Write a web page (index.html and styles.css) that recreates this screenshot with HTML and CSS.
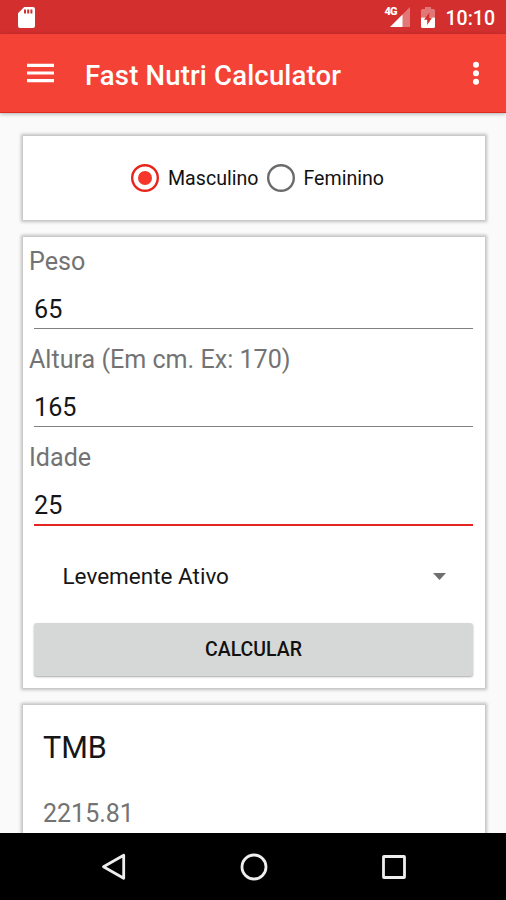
FILE: index.html
```html
<!DOCTYPE html>
<html lang="pt">
<head>
<meta charset="utf-8">
<title>Fast Nutri Calculator</title>
<link rel="stylesheet" href="styles.css">
</head>
<body>
<div class="screen">
  <div class="status">
    <svg class="sd" width="17" height="21" viewBox="0 0 17 21"><path fill="#fff" fill-rule="evenodd" d="M6.2 0H15Q17 0 17 2V19Q17 21 15 21H2Q0 21 0 19V6.2ZM6 2.5V6.500H8V2.500ZM9.200 2.500V6.500H11.200V2.500ZM12.400 2.500V6.500H14.400V2.500Z"/></svg>
    <div class="status-right">
      <div class="signal">
        <svg width="20" height="20" viewBox="0 0 20 20"><path fill="#fff" fill-opacity=".35" d="M20 0V20H12V8Z"/><path fill="#fff" d="M12.500 7.500V20H0Z"/></svg>
        <span class="net">4G</span>
      </div>
      <svg class="battery" width="14" height="21" viewBox="0 0 14 21"><path fill="#fff" fill-opacity=".35" d="M4 0H10V2H12.500Q14 2 14 3.500V10.500H0V3.500Q0 2 1.500 2H4Z"/><path fill="#fff" d="M0 10.500H14V19.500Q14 21 12.500 21H1.500Q0 21 0 19.500Z"/><path fill="#d32f2f" d="M8.300 5.500L3 12.800H6.200V18L11 10.800H8.300Z"/></svg>
      <span class="time">10:10</span>
    </div>
  </div>
  <header class="appbar">
    <svg class="menu" width="27" height="20" viewBox="0 0 27 20"><path fill="#fff" d="M0 .8H27V4H0ZM0 8.400H27V11.600H0ZM0 16H27V19.200H0Z"/></svg>
    <h1 class="title">Fast Nutri Calculator</h1>
    <svg class="more" width="8" height="24" viewBox="0 0 8 24"><g fill="#fff"><circle cx="4" cy="3.800" r="3"/><circle cx="4" cy="12.300" r="3"/><circle cx="4" cy="20.800" r="3"/></g></svg>
  </header>
  <main class="content">
    <section class="card gender">
      <svg width="28" height="28" viewBox="0 0 28 28"><circle cx="14" cy="14" r="12.800" fill="none" stroke="#e8251c" stroke-width="2.400"/><circle cx="14" cy="14" r="7" fill="#f4372a"/></svg>
      <span class="opt male">Masculino</span>
      <svg width="28" height="28" viewBox="0 0 28 28"><circle cx="14" cy="14" r="12.800" fill="none" stroke="#6b6b6b" stroke-width="2.400"/></svg>
      <span class="opt female">Feminino</span>
    </section>
    <section class="card form">
      <div class="label">Peso</div>
      <div class="input">65</div>
      <div class="label">Altura (Em cm. Ex: 170)</div>
      <div class="input">165</div>
      <div class="label">Idade</div>
      <div class="input focused">25</div>
      <div class="spinner"><span>Levemente Ativo</span><svg width="13" height="7" viewBox="0 0 13 7"><path fill="#6f6f6f" d="M0 0H13L6.500 7Z"/></svg></div>
      <div class="button">CALCULAR</div>
    </section>
    <section class="card result">
      <h2 class="tmb">TMB</h2>
      <div class="value">2215.81</div>
    </section>
  </main>
  <nav class="nav">
    <svg width="26" height="30" viewBox="0 0 26 30"><path fill="none" stroke="#eee" stroke-width="2.800" stroke-linejoin="round" d="M22.700 3.300V26.300L2.500 14.800Z"/></svg>
    <svg width="28" height="28" viewBox="0 0 28 28"><circle cx="14" cy="14" r="12" fill="none" stroke="#eee" stroke-width="2.800"/></svg>
    <svg width="26" height="26" viewBox="0 0 26 26"><rect x="2.500" y="2.500" width="21" height="21" rx=".5" fill="none" stroke="#eee" stroke-width="2.800"/></svg>
  </nav>
</div>
</body>
</html>
```
FILE: styles.css
```css
* { box-sizing: border-box; }
body { margin: 0; font-family: Roboto, "Liberation Sans", sans-serif; }
svg { display: block; flex: none; }
.screen { width: 506px; height: 900px; display: flex; flex-direction: column; background: #fafafa; overflow: hidden; }
.status { flex: none; height: 34px; background: #d32f2f; display: flex; align-items: flex-start; justify-content: space-between; padding: 7px 11px 0 18px; }
.status-right { display: flex; }
.signal { position: relative; margin-right: 11px; }
.net { position: absolute; left: -5px; top: -1px; color: #fff; font-size: 11px; font-weight: 900; line-height: 12px; letter-spacing: -.8px; }
.battery { margin-right: 11px; }
.time { color: #fff; font-size: 19.500px; font-weight: 500; line-height: 23px; }
.appbar { flex: none; height: 79px; background: #f44336; border-bottom: 1px solid #dc2c20; box-shadow: 0 1px 4px rgba(0,0,0,.3); display: flex; align-items: center; padding: 0 26px 0 26.500px; z-index: 1; }
.title { margin: 0 auto 0 31.500px; padding-top: 5px; color: #fff; font-size: 27.500px; letter-spacing: .17px; font-weight: 500; line-height: 32px; white-space: nowrap; }
.content { height: 720px; overflow: hidden; padding: 23px 21px 0 23px; display: flex; flex-direction: column; gap: 17px; }
.card { flex: none; background: #fff; box-shadow: 0 0 3px 2px rgba(0,0,0,.23); }
.gender { height: 84px; display: flex; align-items: center; padding-left: 108px; }
.opt { font-size: 19.600px; line-height: 28px; padding-top: 2px; color: #111; white-space: nowrap; }
.male { margin: 0 9px; }
.female { margin-left: 8px; }
.form { height: 451px; padding: 0 12px 0 11px; }
.label { height: 48px; margin-left: -5px; font-size: 25.100px; line-height: 50px; color: #737373; white-space: nowrap; }
.input { height: 44px; border-bottom: 1px solid #808080; margin-bottom: 6px; font-size: 25.200px; line-height: 50px; color: #161616; }
.focused { height: 45px; border-bottom: 2px solid #e52620; margin: 0; }
.spinner { height: 97px; display: flex; align-items: center; justify-content: space-between; padding: 3px 27px 0 28.500px; font-size: 22.500px; color: #161616; }
.button { height: 53px; border-radius: 3px; background: #d6d8d7; box-shadow: 0 1px 2px rgba(0,0,0,.35); text-align: center; font-size: 19.500px; font-weight: 500; line-height: 54px; color: #111; }
.result { height: 180px; padding: 23px 20px; }
.tmb { margin: 0; font-size: 30.500px; font-weight: 400; line-height: 40px; color: #161616; }
.value { margin-top: 26px; font-size: 25px; line-height: 40px; color: #737373; }
.nav { flex: none; height: 67px; background: #000; display: flex; align-items: center; padding-left: 100.500px; }
.nav svg + svg { margin-left: 113.300px; }
```
